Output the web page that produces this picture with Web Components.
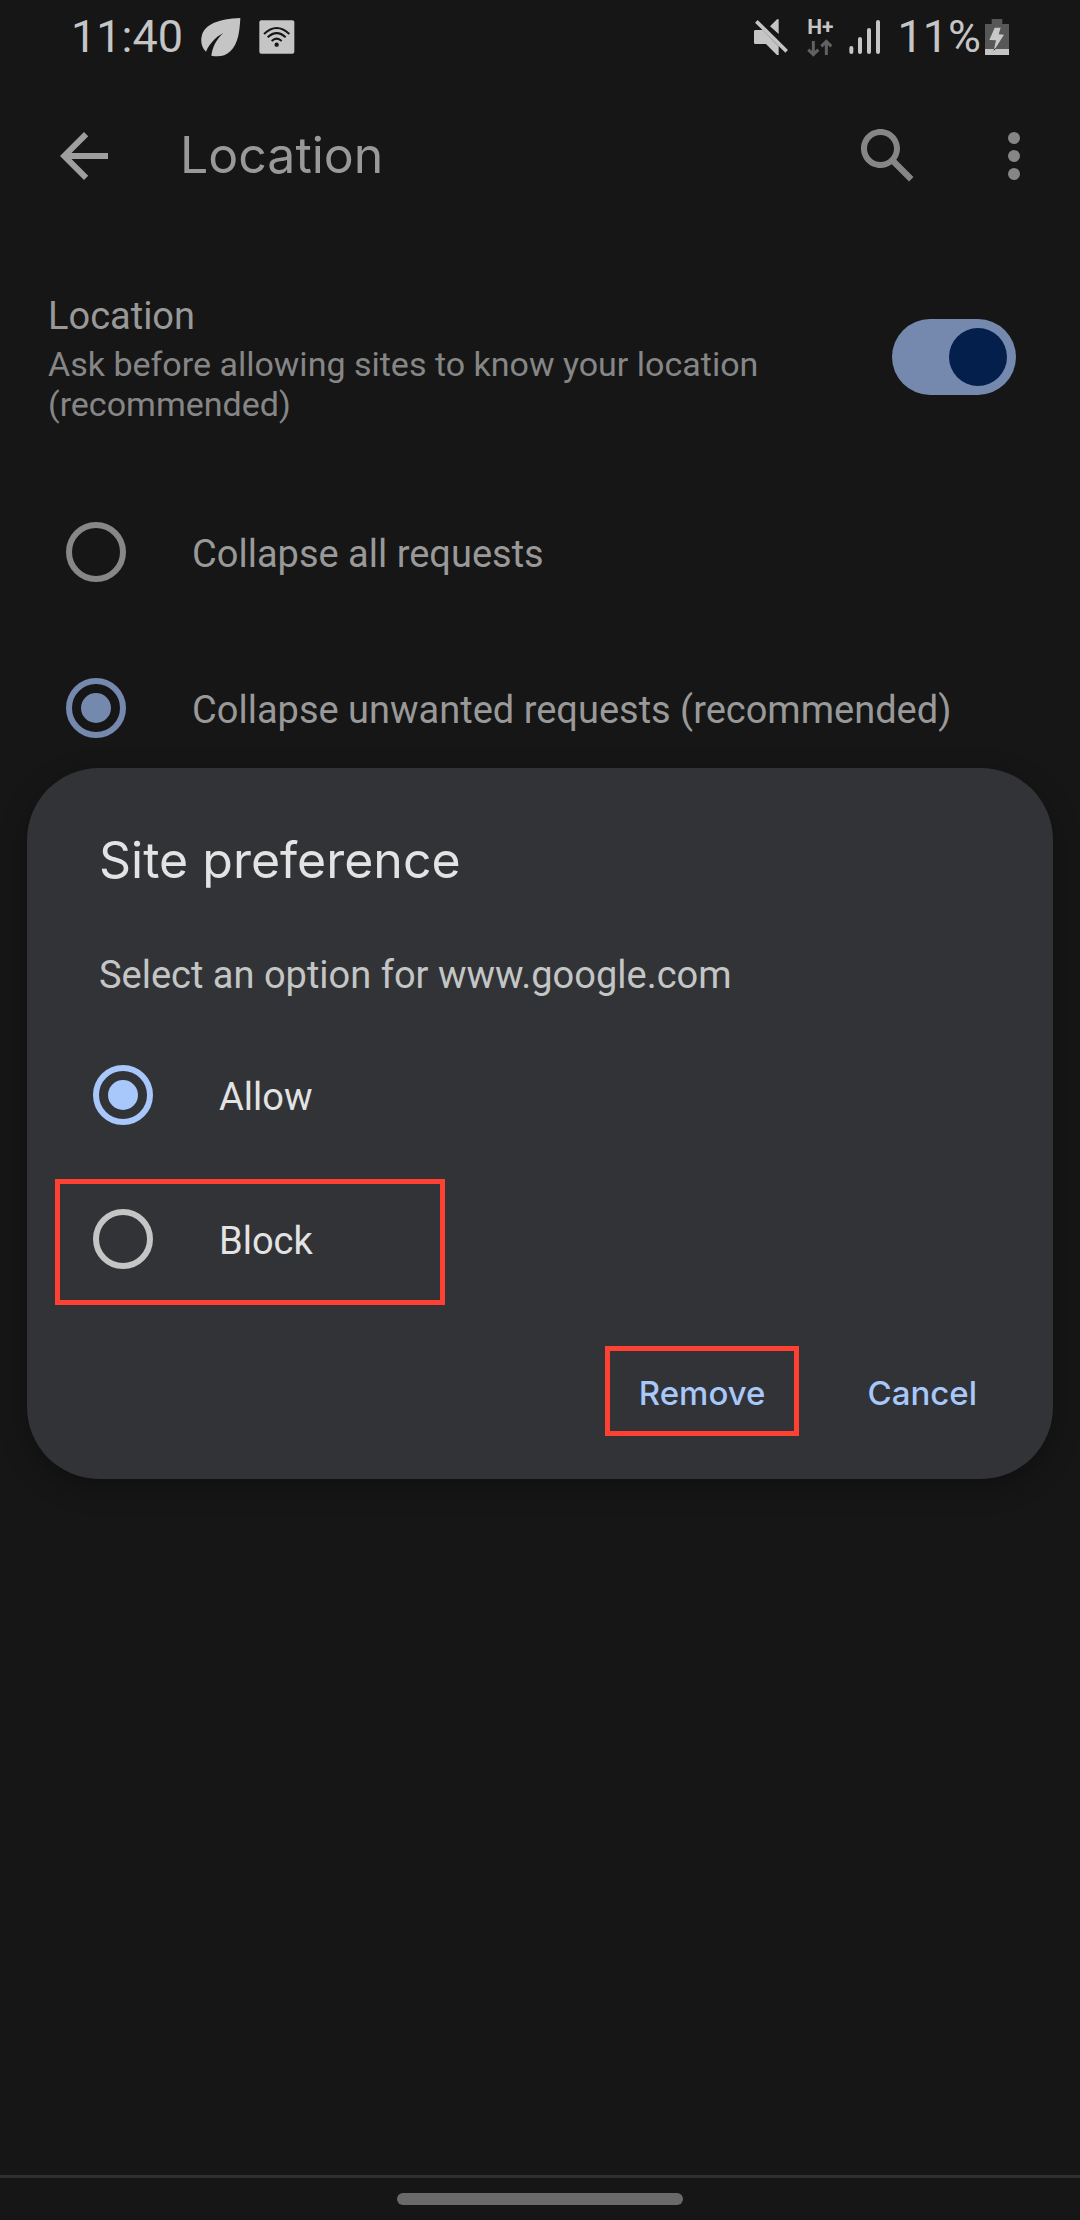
<!DOCTYPE html>
<html lang="en">
<head>
<meta charset="utf-8">
<meta name="viewport" content="width=device-width, initial-scale=1">
<title>Location</title>
<style>
  :root {
    --bg: #161616;
    --surface: #323337;
    --status: #c5c5c5;
    --text: #999;
    --text-dim: #868686;
    --ring: #868887;
    --accent: #7489ad;
    --mark: #ff4133;
  }
  html, body { margin: 0; background: var(--bg); }
  body { font: 38px/44px Roboto, sans-serif; color: var(--text); }
</style>
</head>
<body>
<settings-screen>
  <status-bar slot="top"></status-bar>
  <app-bar slot="top">Location</app-bar>
  <toggle-setting checked>
    Location
    <span slot="summary">Ask before allowing sites to know your location (recommended)</span>
  </toggle-setting>
  <radio-group>
    <radio-option name="requests">Collapse all requests</radio-option>
    <radio-option name="requests" checked>Collapse unwanted requests (recommended)</radio-option>
  </radio-group>
  <choice-dialog slot="overlay">
    <span slot="title">Site preference</span>
    <span slot="message">Select an option for www.google.com</span>
    <radio-group>
      <radio-option name="site" checked>Allow</radio-option>
      <radio-option name="site" marked>Block</radio-option>
    </radio-group>
    <text-button slot="actions" marked>Remove</text-button>
    <text-button slot="actions">Cancel</text-button>
  </choice-dialog>
  <gesture-bar slot="bottom"></gesture-bar>
</settings-screen>

<script>
function define(name, html, setup) {
  const template = document.createElement('template');
  template.innerHTML = html;
  customElements.define(name, class extends HTMLElement {
    constructor() {
      super();
      this.attachShadow({ mode: 'open' }).append(template.content.cloneNode(true));
    }
    connectedCallback() { if (setup) setup(this, this.shadowRoot); }
  });
}

define('settings-screen', `
  <style>
    :host { display: flex; flex-direction: column; min-height: 100vh; position: relative; }
    main { flex: 1; }
    .overlay { position: absolute; inset: 72px 0 45px; display: grid; align-items: center; }
  </style>
  <slot name="top"></slot>
  <main><slot></slot></main>
  <slot name="bottom"></slot>
  <div class="overlay"><slot name="overlay"></slot></div>
`);

define('status-bar', `
  <style>
    :host { display: flex; justify-content: space-between; align-items: center; height: 72px;
            box-sizing: border-box; padding: 2px 71px 0; color: var(--status); font-size: 45px; line-height: 70px; }
    div { display: flex; align-items: center; }
    svg { display: block; flex: none; }
    .left { gap: 18px; }
    .right { gap: 18px; }
    .net { flex-direction: column; font-size: 21px; line-height: 20px; font-weight: 700; gap: 2px; }
    .power { gap: 4px; }
    .mobile { gap: 16px; }
  </style>
  <div class="left">
    <span>11:40</span>
    <svg width="40" height="40" viewBox="449 48 120 120" fill="#c5c5c5"><path d="M567 51C565 90 561 128 537 151C521 167 500 168 480 164C483 140 494 116 516 96C492 108 473 131 464 152C450 139 447 119 452 102C462 70 500 54 567 51Z"/></svg>
    <svg width="36" height="36" viewBox="626 54 108 108"><rect x="627" y="58" width="105" height="100" rx="6" fill="#c5c5c5"/><g fill="none" stroke="#161616" stroke-width="6"><path d="M641 99Q679 63 717 99"/><path d="M652 109Q679 84 706 109"/><path d="M664 120Q679 106 694 120"/></g><circle cx="679" cy="131" r="6.500" fill="#161616"/></svg>
  </div>
  <div class="right">
    <svg width="36" height="38" viewBox="63 51 108 114" fill="#c5c5c5"><path d="M114 76L135 55H140V99ZM70 87H92L140 136V162H135L102 129H70Q66 129 66 125V91Q66 87 70 87Z"/><path d="M73 61L164 151" stroke="#c5c5c5" stroke-width="11"/></svg>
    <div class="mobile">
      <div class="net"><span>H+</span>
        <svg width="26" height="18" viewBox="230 117 78 54" fill="none" stroke="#616161" stroke-width="9"><path d="M249 123V163M234 149L249 164L264 149M288 165V125M273 139L288 124L303 139"/></svg>
      </div>
      <svg width="32" height="36" viewBox="358 57 96 108" fill="none" stroke="#c5c5c5" stroke-width="12" stroke-linecap="round"><path d="M365 144V156M391 117V156M418 90V156M445 66V156"/></svg>
      <div class="power"><span>11%</span>
        <svg width="24" height="36" viewBox="765 54 72 108"><path d="M785 54h32v15h20v93h-72V69h20z" fill="#575757"/><path d="M765 144h72v18h-72z" fill="#c5c5c5"/><path d="M794 80H812L806 100L822 101L791 150L798 118L778 117Z" fill="#c8c8c8"/><path d="M790 150L793 143H798Z" fill="#222"/></svg>
      </div>
    </div>
  </div>
`);

define('app-bar', `
  <style>
    :host { display: flex; align-items: center; height: 168px; box-sizing: border-box; padding: 0 30px 0 48px; }
    h1 { flex: 1; margin: 0 0 0 60px; padding-bottom: 2px; font: 400 50px/64px Inter, sans-serif; }
    button { all: unset; width: 72px; height: 72px; color: var(--text-dim); cursor: pointer; }
    .back { color: #9e9e9e; }
    .more { margin-left: 54px; }
    svg { display: block; fill: currentColor; }
  </style>
  <button class="back" aria-label="Back"><svg width="72" height="72" viewBox="0 0 24 24"><path d="M20 11H7.830l5.590-5.590L12 4l-8 8 8 8 1.410-1.410L7.830 13H20z"/></svg></button>
  <h1><slot></slot></h1>
  <button aria-label="Search"><svg width="72" height="72" viewBox="0 0 24 24"><path fill-rule="evenodd" d="M20.490 19l-5.730-5.730C15.530 12.200 16 10.910 16 9.500 16 5.910 13.090 3 9.500 3S3 5.910 3 9.500 5.910 16 9.500 16c1.410 0 2.700-.470 3.770-1.240L19 20.490 20.490 19zM5 9.500C5 7.010 7.010 5 9.500 5S14 7.010 14 9.500 11.990 14 9.500 14 5 11.990 5 9.500z"/></svg></button>
  <button class="more" aria-label="More options"><svg width="72" height="72" viewBox="0 0 24 24"><circle cx="12" cy="6" r="2"/><circle cx="12" cy="12" r="2"/><circle cx="12" cy="18" r="2"/></svg></button>
`);

define('toggle-setting', `
  <style>
    :host { display: block; }
    label { display: flex; align-items: center; gap: 96px; padding: 50px 64px 50px 48px; }
    .text { flex: 1; display: flex; flex-direction: column; gap: 6px; padding-top: 4px; }
    .summary { font-size: 34px; line-height: 40px; color: var(--text-dim); }
    input { appearance: none; flex: none; display: flex; justify-content: flex-start; align-items: center; margin: 0;
            box-sizing: border-box; width: 124px; height: 76px; padding: 0 9px; border-radius: 38px; background: #555; }
    input::before { content: ""; width: 58px; height: 58px; border-radius: 50%; background: #041f4b; }
    input:checked { background: var(--accent); justify-content: flex-end; }
  </style>
  <label>
    <span class="text"><span><slot></slot></span><span class="summary"><slot name="summary"></slot></span></span>
    <input type="checkbox" role="switch">
  </label>
`, (host, root) => { root.querySelector('input').checked = host.hasAttribute('checked'); });

define('radio-group', `
  <style>:host { display: flex; flex-direction: column; }</style>
  <slot></slot>
`, host => {
  host.setAttribute('role', 'radiogroup');
  host.addEventListener('option-picked', event => {
    for (const option of host.children) {
      option.shadowRoot.querySelector('input').checked = option === event.target;
    }
  });
});

define('radio-option', `
  <style>
    :host { display: block; }
    label { position: relative; display: flex; align-items: center; gap: 66px; height: var(--row, 156px); padding: 0 66px; }
    span { padding-top: 4px; }
    input { appearance: none; flex: none; display: grid; place-items: center; box-sizing: border-box; margin: 0;
            width: 60px; height: 60px; border: 6px solid var(--ring); border-radius: 50%; }
    input:checked { border-color: var(--accent); }
    input:checked::before { content: ""; width: 30px; height: 30px; border-radius: 50%; background: var(--accent); }
    :host([marked]) label::after { content: ""; position: absolute; top: 12px; bottom: 6px; left: 28px; width: 380px; border: 5px solid var(--mark); }
  </style>
  <label><input type="radio"><span><slot></slot></span></label>
`, (host, root) => {
  const input = root.querySelector('input');
  input.name = host.getAttribute('name');
  input.checked = host.hasAttribute('checked');
  input.addEventListener('change', () => host.dispatchEvent(new CustomEvent('option-picked', { bubbles: true })));
});

define('choice-dialog', `
  <style>
    :host { display: block; margin: 0 27px; --row: 144px; --accent: #a8c7fa; --ring: #c4c6c5; color: #e3e3e3; }
    dialog { position: static; display: block; width: auto; margin: 0; border: 0; padding: 60px 0 43px; color: inherit;
             background: var(--surface); border-radius: 72px; box-shadow: 0 8px 28px rgba(0, 0, 0, .3); }
    h2 { margin: 0; padding: 0 72px; font: 400 50px/64px Inter, sans-serif; }
    p { margin: 61px 0 26px; padding: 0 72px; color: #c4c6c5; }
    footer { display: flex; justify-content: flex-end; gap: 34px; padding: 35px 42px 0 72px; }
  </style>
  <dialog open aria-labelledby="title">
    <h2 id="title"><slot name="title"></slot></h2>
    <p><slot name="message"></slot></p>
    <slot></slot>
    <footer><slot name="actions"></slot></footer>
  </dialog>
`);

define('text-button', `
  <style>
    :host { display: block; }
    button { display: block; height: 90px; margin: 0; padding: 4px 29px 0; border: 5px solid transparent; background: none;
             color: var(--accent); font: 500 33px/44px Inter, sans-serif; cursor: pointer; }
    :host([marked]) button { border-color: var(--mark); }
  </style>
  <button type="button"><slot></slot></button>
`);

define('gesture-bar', `
  <style>
    :host { display: flex; justify-content: center; align-items: center; height: 42px; border-top: 3px solid #303030; }
    div { width: 286px; height: 12px; border-radius: 6px; background: #6a6a6a; }
  </style>
  <div></div>
`);
</script>
</body>
</html>
